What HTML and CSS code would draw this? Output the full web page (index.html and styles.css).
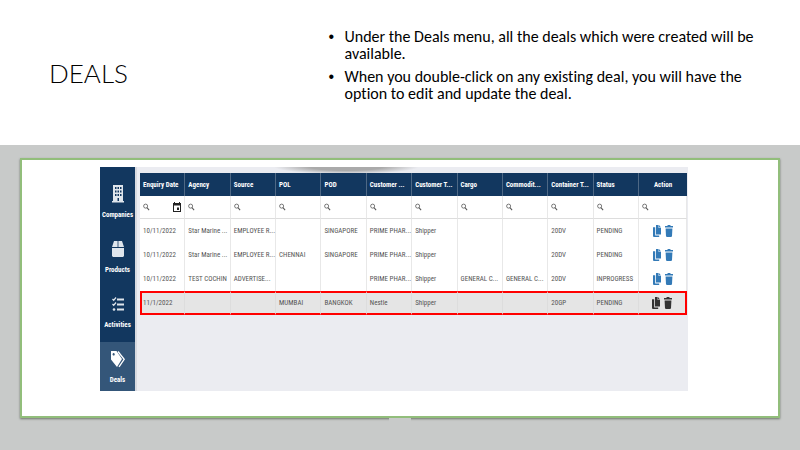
FILE: index.html
```html
<!DOCTYPE html>
<html lang="en">
<head>
<meta charset="utf-8">
<meta name="viewport" content="width=device-width, initial-scale=1">
<title>Deals</title>
<link rel="stylesheet" href="styles.css">
</head>
<body>
<svg class="defs" aria-hidden="true">
  <symbol id="search" viewBox="0 0 8 8"><circle cx="3" cy="3" r="2.300" fill="none" stroke="currentColor" stroke-width=".9"/><path d="M4.500 4.700 7 7.600" stroke="currentColor" stroke-width="1.200"/></symbol>
  <symbol id="copy" viewBox="0 0 8 12"><path d="M3 0h2.600v3H8v6.600H3Z" fill="currentColor"/><path d="M6.100 0 8 2.400H6.100ZM0 2.200h2.200v8.200h4V12H.7L0 11.300Z" fill="currentColor"/></symbol>
  <symbol id="trash" viewBox="0 0 8 12"><path d="M0 1h2.300l.5-1h2.400l.5 1H8v1.500H0ZM.6 3.400h6.800L7 11.200l-.8.8H1.800l-.8-.8Z" fill="currentColor"/></symbol>
</svg>
<header class="intro">
  <h1>DEALS</h1>
  <ul>
    <li>Under the Deals menu, all the deals which were created will be available.</li>
    <li>When you double-click on any existing deal, you will have the option to edit and update the deal.</li>
  </ul>
</header>
<main class="stage">
  <section class="card">
    <div class="app">
      <nav class="sidebar">
        <a href="#companies">
          <svg viewBox="0 0 14 18"><path fill="currentColor" fill-rule="evenodd" d="M2 0h10v16h1v1.500H1V16h1ZM4 2v2h1.500V2Zm2.500 0v2H8V2ZM9 2v2h1.500V2ZM4 5.500v2h1.500v-2Zm2.500 0v2H8v-2Zm2.500 0v2h1.500v-2ZM4 9v2h1.500V9Zm2.500 0v2H8V9ZM9 9v2h1.500V9Zm-2.500 4v3H8v-3Z"/></svg>
          <span>Companies</span>
        </a>
        <a href="#products">
          <svg viewBox="0 0 14 18"><path fill="currentColor" d="M3 1h3.600v6H1ZM7.400 1H11l2 6H7.400ZM1 8h12v8l-1 1H2l-1-1Z"/></svg>
          <span>Products</span>
        </a>
        <a href="#activities">
          <svg viewBox="0 0 14 18"><path stroke="currentColor" stroke-width="1.800" fill="none" d="M6 4.500h7M6 9.500h7M6 14.500h7"/><path stroke="currentColor" stroke-width="1.300" fill="none" d="m1.500 4 1.200 1.300L5 2.500M1.500 9l1.200 1.300L5 7.500"/><circle cx="3" cy="14.500" r="1.300" fill="currentColor"/></svg>
          <span>Activities</span>
        </a>
        <a href="#deals" class="active">
          <svg viewBox="0 0 14 18"><path fill="currentColor" fill-rule="evenodd" d="M0 1h5.500L11 9l-5 8L0 9.500ZM2.600 3a1.100 1.300 0 1 0 .1 0Z"/><path fill="none" stroke="currentColor" stroke-width="1.300" d="m7 1.500 6.200 7.800L8 16.800"/></svg>
          <span>Deals</span>
        </a>
      </nav>
      <div class="content">
        <table>
          <colgroup><col span="11"><col class="col-action"></colgroup>
          <thead>
            <tr class="head"><th>Enquiry Date</th><th>Agency</th><th>Source</th><th>POL</th><th>POD</th><th>Customer ...</th><th>Customer T...</th><th>Cargo</th><th>Commodit...</th><th>Container T...</th><th>Status</th><th>Action</th></tr>
            <tr class="filters">
              <td><label><svg><use href="#search"/></svg><input type="text" aria-label="Enquiry Date"><svg class="calendar" viewBox="0 0 8 10"><path fill="currentColor" fill-rule="evenodd" d="M1 1V0h1v1h4V0h1v1h1v9H0V1ZM1 3.500V9h6V3.500ZM4 5.500h2v2.500H4Z"/></svg></label></td>
              <td><label><svg><use href="#search"/></svg><input type="text" aria-label="Agency"></label></td>
              <td><label><svg><use href="#search"/></svg><input type="text" aria-label="Source"></label></td>
              <td><label><svg><use href="#search"/></svg><input type="text" aria-label="POL"></label></td>
              <td><label><svg><use href="#search"/></svg><input type="text" aria-label="POD"></label></td>
              <td><label><svg><use href="#search"/></svg><input type="text" aria-label="Customer"></label></td>
              <td><label><svg><use href="#search"/></svg><input type="text" aria-label="Customer type"></label></td>
              <td><label><svg><use href="#search"/></svg><input type="text" aria-label="Cargo"></label></td>
              <td><label><svg><use href="#search"/></svg><input type="text" aria-label="Commodity"></label></td>
              <td><label><svg><use href="#search"/></svg><input type="text" aria-label="Container type"></label></td>
              <td><label><svg><use href="#search"/></svg><input type="text" aria-label="Status"></label></td>
              <td><label><svg><use href="#search"/></svg><input type="text" aria-label="Action"></label></td>
            </tr>
          </thead>
          <tbody>
            <tr><td>10/11/2022</td><td>Star Marine ...</td><td>EMPLOYEE R...</td><td></td><td>SINGAPORE</td><td>PRIME PHAR...</td><td>Shipper</td><td></td><td></td><td>20DV</td><td>PENDING</td><td class="actions"><button aria-label="Copy"><svg><use href="#copy"/></svg></button><button aria-label="Delete"><svg><use href="#trash"/></svg></button></td></tr>
            <tr><td>10/11/2022</td><td>Star Marine ...</td><td>EMPLOYEE R...</td><td>CHENNAI</td><td>SINGAPORE</td><td>PRIME PHAR...</td><td>Shipper</td><td></td><td></td><td>20DV</td><td>PENDING</td><td class="actions"><button aria-label="Copy"><svg><use href="#copy"/></svg></button><button aria-label="Delete"><svg><use href="#trash"/></svg></button></td></tr>
            <tr><td>10/11/2022</td><td>TEST COCHIN</td><td>ADVERTISE...</td><td></td><td></td><td>PRIME PHAR...</td><td>Shipper</td><td>GENERAL C...</td><td>GENERAL C...</td><td>20DV</td><td>INPROGRESS</td><td class="actions"><button aria-label="Copy"><svg><use href="#copy"/></svg></button><button aria-label="Delete"><svg><use href="#trash"/></svg></button></td></tr>
            <tr class="selected"><td>11/1/2022</td><td></td><td></td><td>MUMBAI</td><td>BANGKOK</td><td>Nestle</td><td>Shipper</td><td></td><td></td><td>20GP</td><td>PENDING</td><td class="actions"><button aria-label="Copy"><svg><use href="#copy"/></svg></button><button aria-label="Delete"><svg><use href="#trash"/></svg></button></td></tr>
          </tbody>
        </table>
      </div>
    </div>
  </section>
</main>
</body>
</html>
```
FILE: styles.css
```css
* { box-sizing: border-box; }
body {
  margin: 0;
  min-height: 100vh;
  display: flex;
  flex-direction: column;
  background: #fff;
  color: #000;
  font-family: Carlito, Lato, "Open Sans", sans-serif;
  font-variant-ligatures: none;
}
.defs { display: none; }
.intro {
  display: grid;
  grid-template-columns: 41% 1fr;
  align-items: center;
  padding: 28px 40px 43px 49px;
}
h1 {
  margin: 16px 0 0;
  font-family: Lato, sans-serif;
  font-size: 26px;
  line-height: 32px;
  font-weight: 300;
}
ul {
  margin: 0;
  padding-left: 4px;
  list-style: none;
  font-size: 16px;
  line-height: 17px;
}
li { position: relative; }
li + li { margin-top: 6px; }
li::before {
  content: "•";
  position: absolute;
  left: -16px;
  font-family: "Liberation Sans", sans-serif;
}
.stage {
  flex: 1;
  padding: 13px 20px 32px;
  background: #c8cac9;
}
.card {
  position: relative;
  padding: 7px 90px 25px 78px;
  background: #fff;
  border: 2px solid #92be7b;
  box-shadow: 0 1px 2px #6d7469;
}
.card::after {
  content: "";
  position: absolute;
  top: calc(100% + 2px);
  left: calc(50% - 11px);
  width: 22px;
  height: 4px;
  background: #c8cac9;
}
.app {
  display: flex;
  min-height: 224px;
  background: #ebecf1;
  font-family: "Roboto Condensed", Roboto, sans-serif;
  font-size: 7px;
  line-height: 10px;
}
.sidebar {
  display: flex;
  flex-direction: column;
  width: 35px;
  padding-top: 10px;
  background: #12375f;
}
.sidebar a {
  display: flex;
  flex-direction: column;
  align-items: center;
  gap: 7px;
  height: 55px;
  padding-top: 8px;
  color: #dfe5ec;
  text-decoration: none;
  font-weight: 700;
}
.sidebar svg { width: 14px; height: 18px; }
.sidebar span { color: #fff; }
.sidebar .active {
  height: 49px;
  background: #345679;
  color: #fff;
}
.content {
  flex: 1;
  min-width: 0;
  padding: 6px 1px 0 3px;
  border-left: 2px solid #d8dae0;
  background: radial-gradient(ellipse 72px 7px at 38% 0, #aaa 0 50%, transparent) no-repeat;
}
table {
  width: 100%;
  table-layout: fixed;
  border-collapse: separate;
  border-spacing: 0;
  background: #fff;
  color: #555;
}
.col-action { width: 48px; }
th, td {
  height: 24px;
  padding: 0 0 0 3px;
  border-right: 1px solid #e8e8e8;
  text-align: left;
  vertical-align: middle;
  white-space: nowrap;
}
.head th {
  height: 23px;
  background: #12375f;
  border-color: #4e6885;
  color: #fff;
}
.head th:last-child { padding: 0; text-align: center; border: 0; }
.filters td { height: 23px; border-bottom: 1px solid #ddd; }
label { display: flex; align-items: center; padding-right: 3px; }
label svg { flex: none; width: 7px; height: 8px; color: #555; }
label .calendar { width: 8px; height: 10px; color: #222; }
input {
  flex: 1;
  min-width: 0;
  width: 0;
  height: 14px;
  padding: 0;
  border: 0;
  background: transparent;
  font: inherit;
}
.actions { padding: 0; text-align: center; }
button {
  width: 8px;
  height: 12px;
  padding: 0;
  border: 0;
  background: none;
  color: #337ab7;
  vertical-align: middle;
}
button + button { margin-left: 4px; }
button svg { display: block; width: 8px; height: 12px; }
.selected td {
  background: #e5e5e5;
  border-top: 2px solid #f00;
  border-bottom: 2px solid #f00;
  border-right-color: #ddd;
}
.selected td:first-child { border-left: 2px solid #f00; padding-left: 1px; }
.selected td:last-child { border-right: 2px solid #f00; }
.selected button { color: #333; }
```
